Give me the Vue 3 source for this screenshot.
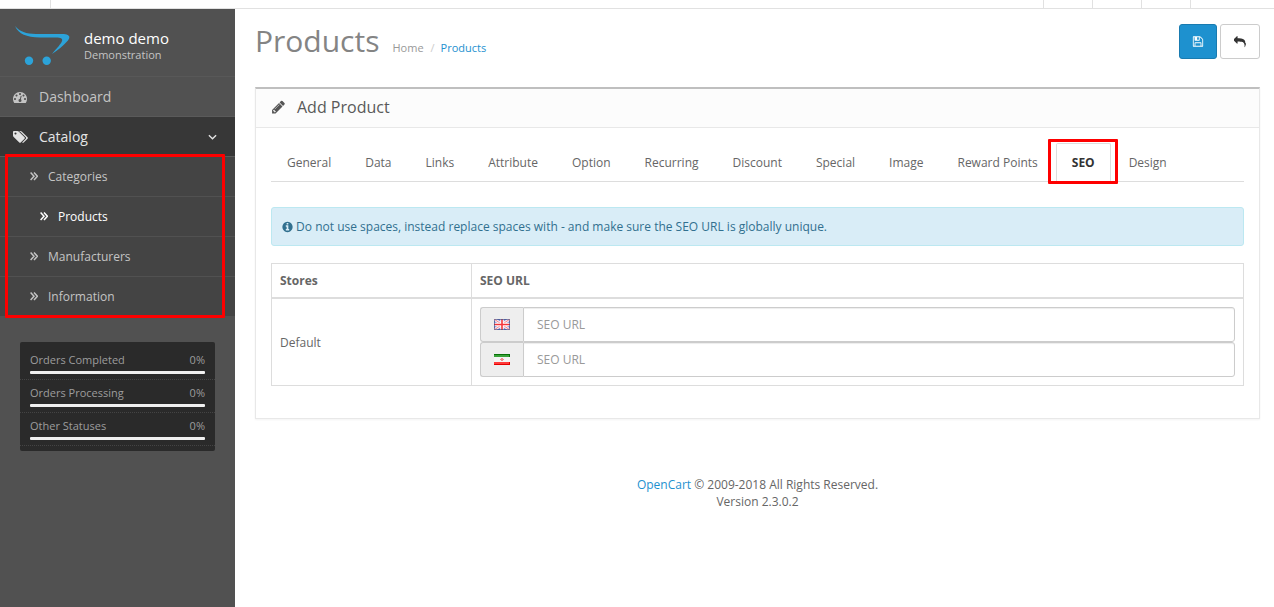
<template>
  <div class="page">
    <!-- Top bar -->
    <header class="topbar">
      <div class="topbar-toggle"></div>
      <div class="topbar-items">
        <div v-for="n in 3" :key="n" class="topbar-item"></div>
        <div class="topbar-item topbar-logout"></div>
      </div>
    </header>

    <div class="wrapper">
      <!-- Sidebar -->
      <aside class="sidebar">
        <div class="profile">
          <svg class="logo" viewBox="0 0 56 42" aria-hidden="true">
            <path d="M1 1C6 7 12 8.700 22 8.900L48 8.900C57 9.200 56.500 12.500 53 16.500C49 21 44 25 38 29C43 23 47 19 48 16C49 13.300 46 12.700 41 12.600L26 12.400C12 12 5 9.500 1 1Z" />
            <circle cx="15" cy="35.700" r="4.200" />
            <circle cx="32.700" cy="35.700" r="4.200" />
          </svg>
          <div>
            <h4 class="profile-name">demo demo</h4>
            <small class="profile-group">Demonstration</small>
          </div>
        </div>

        <nav class="menu">
          <a href="#" class="menu-link">
            <svg class="menu-icon" viewBox="0 0 1920 1792" aria-hidden="true"><path :d="icons.dashboard" /></svg>
            <span>Dashboard</span>
          </a>
          <a href="#" class="menu-link open">
            <svg class="menu-icon" viewBox="0 0 1920 1792" aria-hidden="true"><path :d="icons.tags" /></svg>
            <span>Catalog</span>
            <svg class="menu-arrow" viewBox="0 0 10 6" aria-hidden="true"><path stroke-width="1.500" d="M1 1l4 4 4-4" /></svg>
          </a>
          <div class="submenu">
            <a
              v-for="item in submenu"
              :key="item"
              href="#"
              class="submenu-link"
              :class="{ active: item === 'Products' }"
            >
              <svg class="submenu-icon" viewBox="0 0 8 9" aria-hidden="true"><path stroke-width="1.500" d="M.6.6L4 4.300.6 8M4 .6l3.400 3.700L4 8" /></svg>
              <span>{{ item }}</span>
            </a>
            <div class="highlight highlight-menu"></div>
          </div>
        </nav>

        <ul class="stats">
          <li v-for="stat in stats" :key="stat.label">
            <div class="stat-row">
              <span>{{ stat.label }}</span>
              <span>{{ stat.value }}%</span>
            </div>
            <div class="progress">
              <div class="progress-bar" :style="{ width: stat.value + '%' }"></div>
            </div>
          </li>
        </ul>
      </aside>

      <!-- Content -->
      <main class="content">
        <div class="page-header">
          <h1>Products</h1>
          <div class="breadcrumb">
            <a href="#">Home</a>
            <span class="divider">/</span>
            <a href="#" class="current">Products</a>
          </div>
          <div class="buttons">
            <button type="button" class="btn btn-primary" aria-label="Save">
              <svg class="icon" viewBox="0 0 1792 1792"><path :d="icons.save" /></svg>
            </button>
            <button type="button" class="btn btn-default" aria-label="Cancel">
              <svg class="icon" viewBox="0 0 1792 1792"><path :d="icons.reply" /></svg>
            </button>
          </div>
        </div>

        <section class="panel">
          <div class="panel-heading">
            <svg class="panel-icon" viewBox="0 0 1792 1792" aria-hidden="true"><path :d="icons.pencil" /></svg>
            <h3>Add Product</h3>
          </div>
          <div class="panel-body">
            <nav class="tabs">
              <div v-for="tab in tabs" :key="tab" class="tab">
                <a href="#" class="tab-link" :class="{ active: tab === activeTab }" @click.prevent="activeTab = tab">{{ tab }}</a>
                <div v-if="tab === 'SEO'" class="highlight highlight-tab"></div>
              </div>
            </nav>

            <div class="alert">
              <svg class="alert-icon" viewBox="0 0 1536 1792" aria-hidden="true"><path transform="translate(-128 0)" :d="icons.info" /></svg>
              Do not use spaces, instead replace spaces with - and make sure the SEO URL is globally unique.
            </div>

            <table class="table">
              <thead>
                <tr>
                  <th class="store-col">Stores</th>
                  <th>SEO URL</th>
                </tr>
              </thead>
              <tbody>
                <tr>
                  <td>Default</td>
                  <td>
                    <div class="input-group">
                      <label class="addon" for="seo-en" aria-label="SEO URL English">
                        <svg class="flag" viewBox="0 0 16 11">
                          <path fill="#7d8fd6" d="M0 0h16v11H0z" />
                          <path stroke="#fbeaf0" stroke-width="3" d="M0 0l16 11M16 0L0 11" />
                          <path stroke="#f0868c" d="M0 0l16 11M16 0L0 11" />
                          <path stroke="#fff" stroke-width="3.500" d="M8 0v11M0 5.500h16" />
                          <path stroke="#f5363a" stroke-width="1.600" d="M8 0v11M0 5.500h16" />
                          <path class="flag-edge" stroke="#34417c" stroke-opacity=".6" d="M.5.5h15v10H.5z" />
                        </svg>
                      </label>
                      <input id="seo-en" v-model="seo.en" type="text" placeholder="SEO URL" />
                    </div>
                    <div class="input-group">
                      <label class="addon" for="seo-fa" aria-label="SEO URL Persian">
                        <svg class="flag" viewBox="0 0 16 11">
                          <path fill="#f4f4f4" d="M0 0h16v11H0z" />
                          <path fill="#39a339" d="M0 0h16v3H0z" />
                          <path fill="#087008" d="M0 0h16v1H0zM15 0h1v3h-1z" />
                          <path fill="#ff3b3b" d="M0 8h16v3H0z" />
                          <path fill="#e40000" d="M0 10h16v1H0zM15 8h1v3h-1z" />
                          <path fill="#ee8f8f" d="M7 4h2v1h1v1H9v1H7V6H6V5h1z" />
                        </svg>
                      </label>
                      <input id="seo-fa" v-model="seo.fa" type="text" placeholder="SEO URL" />
                    </div>
                  </td>
                </tr>
              </tbody>
            </table>
          </div>
        </section>

        <footer class="footer">
          <a href="#">OpenCart</a> © 2009-2018 All Rights Reserved.<br />Version 2.3.0.2
        </footer>
      </main>
    </div>
  </div>
</template>

<script setup>
import { reactive, ref } from 'vue';

const submenu = ['Categories', 'Products', 'Manufacturers', 'Information'];

const stats = [
  { label: 'Orders Completed', value: 0 },
  { label: 'Orders Processing', value: 0 },
  { label: 'Other Statuses', value: 0 }
];

const tabs = [
  'General', 'Data', 'Links', 'Attribute', 'Option', 'Recurring',
  'Discount', 'Special', 'Image', 'Reward Points', 'SEO', 'Design'
];
const activeTab = ref('SEO');

const seo = reactive({ en: '', fa: '' });

const icons = {
  dashboard: 'M384 1152q0-53-37.5-90.5t-90.5-37.5-90.5 37.5-37.5 90.5 37.5 90.5 90.5 37.5 90.5-37.5 37.5-90.5zm192-448q0-53-37.5-90.5t-90.5-37.5-90.5 37.5-37.5 90.5 37.5 90.5 90.5 37.5 90.5-37.5 37.5-90.5zm428 481l101-382q6-26-7.5-48.5t-38.5-29.5-48 6.5-30 39.5l-101 382q-60 5-107 43.5t-63 98.5q-20 77 20 146t117 89 146-20 89-117q16-60-6-117t-72-91zm660-33q0-53-37.5-90.5t-90.5-37.5-90.5 37.5-37.5 90.5 37.5 90.5 90.5 37.5 90.5-37.5 37.5-90.5zm-640-640q0-53-37.5-90.5t-90.5-37.5-90.5 37.5-37.5 90.5 37.5 90.5 90.5 37.5 90.5-37.5 37.5-90.5zm448 192q0-53-37.5-90.5t-90.5-37.5-90.5 37.5-37.5 90.5 37.5 90.5 90.5 37.5 90.5-37.5 37.5-90.5zm320 448q0 261-141 483-19 29-54 29h-1402q-35 0-54-29-141-221-141-483 0-182 71-348t191-286 286-191 348-71 348 71 286 191 191 286 71 348z',
  tags: 'M448 448q0-53-37.5-90.5t-90.5-37.5-90.5 37.5-37.5 90.5 37.5 90.5 90.5 37.5 90.5-37.5 37.5-90.5zm1067 576q0 53-37 90l-491 492q-39 37-91 37-53 0-90-37l-715-716q-38-37-64.5-101t-26.5-117v-416q0-52 38-90t90-38h416q53 0 117 26.5t102 64.5l715 714q37 39 37 91zm384 0q0 53-37 90l-491 492q-39 37-91 37-36 0-59-14t-53-45l470-470q37-37 37-90 0-52-37-91l-715-714q-38-38-102-64.5t-117-26.5h224q53 0 117 26.5t102 64.5l715 714q37 39 37 91z',
  pencil: 'M491 1536l91-91-235-235-91 91v107h128v128h107zm523-928q0-22-22-22-10 0-17 7l-542 542q-7 7-7 17 0 22 22 22 10 0 17-7l542-542q7-7 7-17zm-54-192l416 416-832 832h-416v-416zm683 96q0 53-37 90l-166 166-416-416 166-165q36-38 90-38 53 0 91 38l235 234q37 39 37 91z',
  save: 'M512 1536h768v-384h-768v384zm896 0h128v-896q0-14-10-38.5t-20-34.5l-281-281q-10-10-34-20t-39-10v416q0 40-28 68t-68 28h-576q-40 0-68-28t-28-68v-416h-128v1280h128v-416q0-40 28-68t68-28h832q40 0 68 28t28 68v416zm-384-928v-320q0-13-9.5-22.5t-22.5-9.5h-192q-13 0-22.5 9.5t-9.5 22.5v320q0 13 9.5 22.5t22.5 9.5h192q13 0 22.5-9.5t9.5-22.5zm640 32v928q0 40-28 68t-68 28h-1344q-40 0-68-28t-28-68v-1344q0-40 28-68t68-28h928q40 0 88 20t76 48l280 280q28 28 48 76t20 88z',
  reply: 'M1792 1120q0 166-127 451-3 7-10.5 24t-13.5 30-13 22q-12 17-28 17-15 0-23.5-10t-8.5-25q0-9 2.5-26.5t2.5-23.5q5-68 5-123 0-112-19.5-200.5t-54-153.5-89-112-120-78.5-151.5-47-179.5-22-206.5-6.5h-224v256q0 26-19 45t-45 19-45-19l-512-512q-19-19-19-45t19-45l512-512q19-19 45-19t45 19 19 45v256h224q713 0 875 403 53 134 53 333z',
  info: 'M1152 1376v-160q0-14-9-23t-23-9h-96v-512q0-14-9-23t-23-9h-320q-14 0-23 9t-9 23v160q0 14 9 23t23 9h96v320h-96q-14 0-23 9t-9 23v160q0 14 9 23t23 9h448q14 0 23-9t9-23zm-128-896v-160q0-14-9-23t-23-9h-192q-14 0-23 9t-9 23v160q0 14 9 23t23 9h192q14 0 23-9t9-23zm640 416q0 209-103 385.5t-279.5 279.5-385.5 103-385.5-103-279.5-279.5-103-385.5 103-385.5 279.5-279.5 385.5-103 385.5 103 279.5 279.5 103 385.5z'
};
</script>

<style>
body {
  background: #fff;
}

*,
*::before,
*::after {
  box-sizing: border-box;
}
</style>

<style scoped>
.page {
  display: flex;
  flex-direction: column;
  min-height: 100vh;
  font-family: "Open Sans", "Liberation Sans", sans-serif;
  font-size: 12px;
  line-height: 17px;
  color: #666;
}

a {
  color: #1e91cf;
  text-decoration: none;
}

h1,
h3,
h4 {
  margin: 0;
  font-weight: 400;
}

.topbar {
  display: flex;
  justify-content: space-between;
  height: 9px;
  border-bottom: 1px solid #e1e1e1;
}

.topbar-toggle {
  width: 51px;
  border-right: 1px solid #e1e1e1;
}

.topbar-items {
  display: flex;
}

.topbar-item {
  width: 49px;
  border-left: 1px solid #e1e1e1;
}

.topbar-logout {
  width: 84px;
}

.wrapper {
  display: flex;
  flex: 1;
}

/* Sidebar */
.sidebar {
  flex: none;
  width: 235px;
  background: #515151;
}

.profile {
  display: flex;
  gap: 14px;
  padding: 16px 14px 9px;
  border-bottom: 1px solid #585858;
}

.logo {
  width: 56px;
  height: 42px;
  fill: #2ca3d9;
}

.profile-name {
  padding-top: 5px;
  font-size: 15px;
  color: #fff;
}

.profile-group {
  display: block;
  font-size: 11px;
  line-height: 15px;
  color: #c4c4c4;
}

.menu-link {
  display: flex;
  align-items: center;
  gap: 11px;
  height: 40px;
  padding: 0 18px 0 13px;
  border-bottom: 1px solid #5a5a5a;
  font-size: 14px;
  color: #c4c4c4;
}

.menu-link.open {
  background: #373737;
  color: #e4e4e4;
}

.menu-icon {
  width: 15px;
  height: 14px;
  fill: currentColor;
}

.menu-arrow {
  width: 9px;
  height: 6px;
  margin-left: auto;
  fill: none;
  stroke: currentColor;
}

.submenu {
  position: relative;
  background: #444;
}

.submenu-link {
  display: flex;
  align-items: center;
  gap: 10px;
  height: 40px;
  padding-left: 30px;
  border-bottom: 1px solid #515151;
  color: #c4c4c4;
}

.submenu-link.active {
  padding-left: 40px;
  color: #fff;
}

.submenu-icon {
  width: 8px;
  height: 9px;
  fill: none;
  stroke: currentColor;
}

.highlight {
  position: absolute;
  border: 3px solid #fe0000;
  border-radius: 1px;
  pointer-events: none;
}

.highlight-menu {
  top: -3px;
  right: 10px;
  bottom: -1px;
  left: 5px;
}

.stats {
  margin: 25px 20px 0;
  padding: 5px 0;
  border-radius: 2px;
  background: #2a2a2a;
  font-size: 11px;
  line-height: 15px;
  color: #9d9d9d;
  list-style: none;
}

.stats li {
  padding: 5px 10px;
  border-bottom: 1px dotted #444;
}

.stat-row {
  display: flex;
  justify-content: space-between;
}

.progress {
  height: 3px;
  margin-top: 4px;
  border-radius: 1px;
  background: #f0f0f0;
  overflow: hidden;
}

.progress-bar {
  height: 100%;
  background: #1e91cf;
}

/* Content */
.content {
  flex: 1;
  min-width: 0;
  padding: 15px 14px 0 20px;
}

.page-header {
  display: flex;
  align-items: baseline;
  margin-bottom: 28px;
}

h1 {
  font-size: 30px;
  line-height: 33px;
  color: #848484;
}

.breadcrumb {
  display: flex;
  gap: 6px;
  margin-left: 13px;
  font-size: 11px;
}

.breadcrumb a {
  color: #999;
}

.breadcrumb .current {
  color: #1e91cf;
}

.divider {
  padding-left: 1px;
  color: #ccc;
}

.buttons {
  display: flex;
  align-self: flex-start;
  gap: 3px;
  margin-left: auto;
}

.btn {
  display: flex;
  align-items: center;
  justify-content: center;
  height: 35px;
  padding: 0 13px;
  border: 1px solid #ccc;
  border-radius: 3px;
  background: #fff;
  color: #333;
  cursor: pointer;
}

.btn-primary {
  padding: 0 12px;
  border-color: #197bb0;
  background: #1e91cf;
  color: #fff;
}

.icon {
  width: 12px;
  height: 12px;
  fill: currentColor;
}

.btn-primary .icon {
  height: 13px;
}

.panel {
  border: 1px solid #e8e8e8;
  border-top: 2px solid #bfbfbf;
  box-shadow: 0 1px 2px rgba(0, 0, 0, 0.05);
}

.panel-heading {
  display: flex;
  align-items: center;
  gap: 11px;
  height: 39px;
  padding: 0 15px 2px;
  border-bottom: 1px solid #e8e8e8;
  background: #fcfcfc;
}

.panel-icon {
  width: 15px;
  height: 16px;
  fill: #555;
}

.panel-heading h3 {
  font-size: 16px;
  color: #595959;
}

.panel-body {
  padding: 15px;
}

.tabs {
  display: flex;
  margin-bottom: 25px;
  border-bottom: 1px solid #ddd;
}

.tab {
  position: relative;
  margin-right: 2px;
  margin-bottom: -1px;
}

.tab-link {
  display: block;
  padding: 10px 15px;
  border: 1px solid transparent;
  border-radius: 2px 2px 0 0;
  color: #666;
  white-space: nowrap;
}

.tab-link.active {
  border-color: #ddd;
  border-bottom-color: #fff;
  background: #fff;
  font-weight: 700;
  color: #333;
}

.highlight-tab {
  top: -4px;
  right: -7px;
  bottom: -2px;
  left: -8px;
}

.alert {
  margin-bottom: 17px;
  padding: 10px;
  border: 1px solid #bce8f1;
  border-radius: 3px;
  background: #d9edf7;
  color: #31708f;
}

.alert-icon {
  width: 11px;
  height: 12px;
  vertical-align: -2px;
  fill: currentColor;
}

.table {
  width: 100%;
  margin-bottom: 17px;
  border: 1px solid #ddd;
  border-collapse: collapse;
}

th,
td {
  padding: 8px;
  border: 1px solid #ddd;
  text-align: left;
  vertical-align: middle;
}

th {
  border-bottom-width: 2px;
}

.store-col {
  width: 200px;
}

.input-group {
  display: flex;
  height: 35px;
}

.addon {
  display: flex;
  flex: none;
  align-items: center;
  justify-content: center;
  width: 43px;
  border: 1px solid #ccc;
  border-right: 0;
  border-radius: 3px 0 0 3px;
  background: #eee;
}

.flag {
  width: 16px;
  height: 11px;
}

.flag-edge {
  fill: none;
}

input {
  flex: 1;
  min-width: 0;
  padding: 8px 13px;
  border: 1px solid #ccc;
  border-radius: 0 3px 3px 0;
  background: #fff;
  box-shadow: inset 0 1px 1px rgba(0, 0, 0, 0.075);
  font-family: inherit;
  font-size: 12px;
  color: #555;
}

input::placeholder {
  color: #999;
  opacity: 1;
}

.footer {
  padding: 57px 0 20px;
  text-align: center;
}
</style>
